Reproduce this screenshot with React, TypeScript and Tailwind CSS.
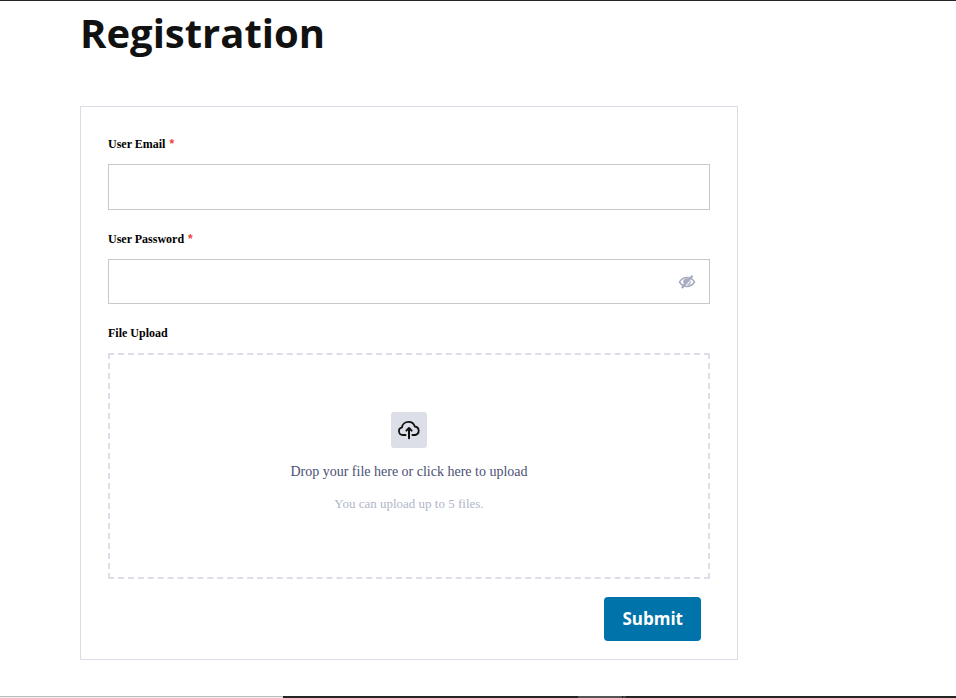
import React, { useState } from 'react';

function Label({ htmlFor, text, required }: { htmlFor: string; text: string; required?: boolean }) {
  return (
    <label htmlFor={htmlFor} className="block text-xs leading-5 font-bold text-black mb-[10px]">
      {text}
      {required && <span className="font-['Liberation_Sans',sans-serif] text-[#f03e3e] font-bold ml-1">*</span>}
    </label>
  );
}

function EyeSlash() {
  return (
    <svg width="18" height="14" viewBox="0 0 18 14" fill="none" stroke="#a6aabf" aria-hidden="true">
      <path d="M1.500 7C3.500 3.800 6 2.600 9 2.600s5.500 1.200 7.500 4.400c-2 3.200-4.500 4.400-7.500 4.400S3.500 10.200 1.500 7Z" strokeWidth="1.500" />
      <path d="M9 3.200a3.700 3.700 0 0 0-3.200 5.800L10.800 3.700A3.700 3.700 0 0 0 9 3.200Z" fill="#a6aabf" stroke="none" />
      <path d="M12.200 5.800c.3 2-.8 3.400-2.700 3.800" strokeWidth="1.200" />
      <path d="M3.800 13 14.500.8" strokeWidth="2.200" />
    </svg>
  );
}

function CloudUpload() {
  return (
    <svg width="24" height="24" viewBox="0 0 24 24" fill="none" stroke="#111" strokeWidth="1.800" strokeLinecap="round" strokeLinejoin="round" aria-hidden="true">
      <path d="M8.600 17H5.800a3.900 3.900 0 0 1-.8-7.700C5.400 6 8.200 3.900 11.500 3.900c3.200 0 5.500 1.900 6.300 4.600A4.300 4.300 0 0 1 18.200 17H15.400" />
      <path d="M12 20.200v-9.400" strokeWidth="2" />
      <path d="m9.400 12.600 2.600-2.600 2.600 2.600" strokeWidth="2" />
    </svg>
  );
}

export default function App() {
  const [visible, setVisible] = useState(false);

  return (
    <div className="min-h-screen flex flex-col bg-white border-t border-[#242424]">
      <main className="flex-1 px-5 sm:px-20 pt-1 pb-9">
        <h1 className="font-['Open_Sans','Noto_Sans',sans-serif] text-[40px] leading-[56px] font-bold text-[#111] mb-[45px]">
          Registration
        </h1>

        <form
          onSubmit={(e) => e.preventDefault()}
          className="w-full max-w-[658px] border border-[#dcdde8] px-[27px] pt-[27px] pb-[18px] font-['Liberation_Serif',serif]"
        >
          <div className="mb-[19px]">
            <Label htmlFor="email" text="User Email" required />
            <input id="email" type="email" className="block w-full h-[46px] px-3 border border-[#c8c8c8] text-sm" />
          </div>

          <div className="mb-[19px]">
            <Label htmlFor="password" text="User Password" required />
            <div className="relative">
              <input
                id="password"
                type={visible ? 'text' : 'password'}
                className="block w-full h-[45px] pl-3 pr-10 border border-[#c8c8c8] text-sm"
              />
              <button
                type="button"
                aria-label="Toggle password visibility"
                onClick={() => setVisible(!visible)}
                className="absolute inset-y-0 right-[14px] flex items-center"
              >
                <EyeSlash />
              </button>
            </div>
          </div>

          <div className="mb-[18px]">
            <Label htmlFor="file" text="File Upload" />
            <input id="file" type="file" multiple className="sr-only" />
            <label
              htmlFor="file"
              className="flex flex-col items-center w-full h-[226px] pt-[57px] border-2 border-dashed border-[#dddfe8] cursor-pointer"
            >
              <span className="flex items-center justify-center w-9 h-9 rounded-[3px] bg-[#dddfe8]">
                <CloudUpload />
              </span>
              <span className="mt-[14px] text-sm leading-5 text-[#4c4f75]">Drop your file here or click here to upload</span>
              <span className="mt-3 text-[13px] leading-5 text-[#b0b5ca]">You can upload up to 5 files.</span>
            </label>
          </div>

          <div className="flex justify-end pr-[9px]">
            <button
              type="submit"
              className="h-11 px-[18px] rounded bg-[#0073aa] text-white font-['Open_Sans','Noto_Sans',sans-serif] text-[17px] leading-6 font-bold"
            >
              Submit
            </button>
          </div>
        </form>
      </main>

      <footer className="flex h-[2px] bg-[#242424]">
        <div className="w-[283px] border-t border-[#bdbdbd] bg-[#eee]" />
        <div className="ml-[295px] w-[44px] bg-[#555]" />
        <div className="ml-px w-[3px] bg-[#444]" />
      </footer>
    </div>
  );
}
